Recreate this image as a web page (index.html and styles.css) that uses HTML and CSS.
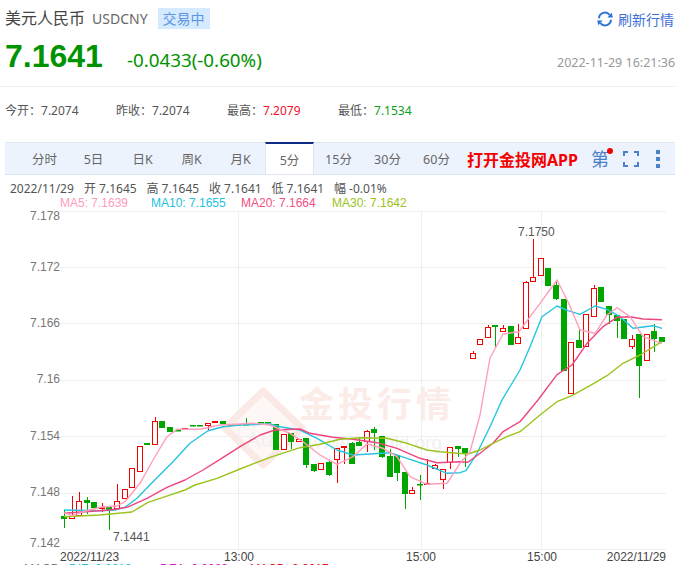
FILE: index.html
```html
<!DOCTYPE html>
<html lang="zh-CN">
<head>
<meta charset="utf-8">
<title>美元人民币 USDCNY</title>
<link rel="stylesheet" href="styles.css">
</head>
<body>
<div class="page">
  <header class="title-row">
    <h1 class="name">美元人民币</h1>
    <span class="code">USDCNY</span>
    <span class="status">交易中</span>
    <a class="refresh">
      <svg class="refresh-icon" viewBox="0 0 16 16" width="16" height="16">
        <path d="M2 7.2A6 6 0 0 1 12.6 3.8" fill="none" stroke="#2a72d6" stroke-width="2"/>
        <path d="M14 8.8A6 6 0 0 1 3.4 12.2" fill="none" stroke="#2a72d6" stroke-width="2"/>
        <path d="M15.8 6.6L10.4 6.6L14.6 1.8Z" fill="#2a72d6"/>
        <path d="M0.2 9.4L5.6 9.4L1.4 14.2Z" fill="#2a72d6"/>
      </svg>
      刷新行情
    </a>
  </header>
  <section class="price-row">
    <span class="price">7.1641</span>
    <span class="change">-0.0433(-0.60%)</span>
    <time class="stamp">2022-11-29 16:21:36</time>
  </section>
  <section class="stats">
    <div class="stat">今开：<span class="val">7.2074</span></div>
    <div class="stat">昨收：<span class="val">7.2074</span></div>
    <div class="stat">最高：<span class="val up">7.2079</span></div>
    <div class="stat">最低：<span class="val down">7.1534</span></div>
  </section>
  <nav class="tabs">
    <a class="tab">分时</a>
    <a class="tab">5日</a>
    <a class="tab">日K</a>
    <a class="tab">周K</a>
    <a class="tab">月K</a>
    <a class="tab active">5分</a>
    <a class="tab">15分</a>
    <a class="tab">30分</a>
    <a class="tab">60分</a>
    <a class="promo">打开金投网APP</a>
    <span class="tool-di">第<i class="dot"></i></span>
    <svg class="tool-full" viewBox="0 0 16 16" width="16" height="16">
      <path d="M1 5V1H5M11 1H15V5M15 11V15H11M5 15H1V11" fill="none" stroke="#4a80cc" stroke-width="2"/>
    </svg>
    <span class="tool-more"><i></i><i></i><i></i></span>
  </nav>
  <div class="info">
    <span class="info-date">2022/11/29</span>
    <span class="info-item">开 7.1645</span>
    <span class="info-item">高 7.1645</span>
    <span class="info-item">收 7.1641</span>
    <span class="info-item">低 7.1641</span>
    <span class="info-item">幅 -0.01%</span>
  </div>
  <div class="legend">
    <span class="ma ma5">MA5: 7.1639</span>
    <span class="ma ma10">MA10: 7.1655</span>
    <span class="ma ma20">MA20: 7.1664</span>
    <span class="ma ma30">MA30: 7.1642</span>
  </div>
  <svg id="chart" class="chart" viewBox="0 211 675 352" width="675" height="352">
    <g class="watermark">
      <polygon class="wm-diamond" points="263,391 302,428 263,465 225,428"/>
      <text class="wm-title" x="299" y="417">金投行情</text>
      <text class="wm-au" x="246" y="447">Au</text>
      <text class="wm-url" x="308" y="449">www.cngold.org</text>
    </g>
    <g id="grid"></g>
    <g id="candles"></g>
    <g id="lines"></g>
    <g class="axis-y">
      <text x="60" y="220">7.178</text>
      <text x="60" y="271">7.172</text>
      <text x="60" y="327">7.166</text>
      <text x="60" y="383">7.16</text>
      <text x="60" y="440">7.154</text>
      <text x="60" y="496">7.148</text>
      <text x="60" y="547">7.142</text>
    </g>
    <g class="axis-x">
      <text x="60" y="561">2022/11/23</text>
      <text class="mid" x="239" y="561">13:00</text>
      <text class="mid" x="421" y="561">15:00</text>
      <text class="mid" x="542" y="561">15:00</text>
      <text class="end" x="666" y="561">2022/11/29</text>
    </g>
    <text class="mark" x="518" y="236">7.1750</text>
    <text class="mark" x="113" y="541">7.1441</text>
  </svg>
  <div class="legend-low">
    <span class="low low-a">MACD</span>
    <span class="low low-b">DIF: 0.0013</span>
    <span class="low low-c">DEA: 0.0023</span>
    <span class="low low-d">MACD: 0.0017</span>
  </div>
</div>
<script src="chart.js"></script>
</body>
</html>
```
FILE: styles.css
```css
html, body {
  margin: 0;
  padding: 0;
  background: #fff;
}
.page {
  width: 675px;
  height: 565px;
  overflow: hidden;
  font-family: "Noto Sans", "Noto Sans CJK SC", sans-serif;
  color: #555;
}
.title-row {
  display: flex;
  align-items: center;
  height: 21px;
  margin-top: 8px;
  padding-left: 5px;
}
.name {
  margin: 0;
  font-size: 16px;
  font-weight: 400;
  line-height: 21px;
  color: #444;
}
.code {
  margin-left: 7px;
  font-size: 14px;
  color: #666;
}
.status {
  margin-left: 10px;
  width: 52px;
  height: 21px;
  line-height: 21px;
  text-align: center;
  font-size: 14px;
  color: #5b95e0;
  background: #d5e9ff;
}
.refresh {
  margin-left: auto;
  display: flex;
  align-items: center;
  gap: 5px;
  font-size: 14px;
  color: #3f6fd6;
  width: 78px;
}
.price-row {
  display: flex;
  align-items: baseline;
  height: 54px;
  padding: 3px 0 0 5px;
  border-bottom: 1px solid #eee;
}
.price {
  font-family: "Liberation Sans", sans-serif;
  font-weight: 700;
  font-size: 32px;
  line-height: 48px;
  color: #009300;
}
.change {
  margin-left: 24px;
  font-size: 18.8px;
  color: #009300;
}
.stamp {
  margin-left: auto;
  width: 118px;
  font-size: 12.5px;
  white-space: nowrap;
  color: #999;
}
.stats {
  display: flex;
  height: 55px;
  align-items: center;
  padding: 0 0 9px 5px;
  font-size: 12px;
  color: #555;
  box-sizing: border-box;
}
.stat {
  width: 111px;
}
.val { color: #555; }
.up { color: #f0102a; }
.down { color: #09a01e; }
.tabs {
  display: flex;
  align-items: stretch;
  height: 31px;
  margin-left: 5px;
  padding-left: 15px;
  background: #edf3fd;
  border-top: 1px solid #dfe6f2;
  border-bottom: 1px solid #dfe6f2;
  font-size: 12.5px;
  color: #666;
}
.tab {
  width: 49px;
  flex: none;
  display: flex;
  align-items: center;
  justify-content: center;
  box-sizing: border-box;
}
.tab.active {
  height: 32px;
  margin-top: -1px;
  background: #fff;
  border-top: 2px solid #0d2a85;
  border-left: 1px solid #dfe6f2;
  border-right: 1px solid #dfe6f2;
}
.promo {
  margin-left: 6px;
  width: 124px;
  display: flex;
  align-items: center;
  font-size: 16px;
  font-weight: 700;
  color: #f40000;
  white-space: nowrap;
}
.tool-di {
  position: relative;
  align-self: center;
  font-size: 18px;
  color: #4a80cc;
  line-height: 20px;
}
.dot {
  position: absolute;
  top: -1px;
  right: -4px;
  width: 6px;
  height: 6px;
  border-radius: 50%;
  background: #f40000;
}
.tool-full {
  align-self: center;
  margin-left: 14px;
}
.tool-more {
  align-self: center;
  margin-left: 17px;
  display: flex;
  flex-direction: column;
  gap: 3px;
}
.tool-more i {
  display: block;
  width: 4px;
  height: 4px;
  background: #4a80cc;
}
.info {
  display: flex;
  padding-left: 10px;
  margin-top: 6px;
  height: 15px;
  line-height: 15px;
  font-size: 12px;
  color: #555;
  white-space: nowrap;
}
.info-date { width: 74px; }
.info-item { width: 62.5px; }
.legend {
  display: flex;
  height: 15px;
  line-height: 15px;
  margin-bottom: -6px;
  font-family: "Liberation Sans", sans-serif;
  font-size: 12px;
  white-space: nowrap;
}
.ma { flex: none; }
.ma5 { margin-left: 60px; width: 91px; color: #ff9cbb; }
.ma10 { width: 90px; color: #22c1dd; }
.ma20 { width: 91px; color: #f5507f; }
.ma30 { color: #9ac31c; }
.chart {
  display: block;
  margin-top: 6px;
}
.axis-y text {
  font-family: "Liberation Sans", sans-serif;
  font-size: 12px;
  fill: #777;
  text-anchor: end;
}
.axis-x text {
  font-family: "Liberation Sans", sans-serif;
  font-size: 12px;
  fill: #444;
}
.axis-x .mid { text-anchor: middle; }
.axis-x .end { text-anchor: end; }
.mark {
  font-family: "Liberation Sans", sans-serif;
  font-size: 12px;
  fill: #555;
}
.wm-diamond {
  fill: #fdf8f6;
  stroke: #fbe9e5;
  stroke-width: 7;
  stroke-linejoin: round;
}
.wm-title {
  font-family: "Noto Sans CJK SC", sans-serif;
  font-weight: 700;
  font-size: 35px;
  letter-spacing: 4px;
  fill: #fbece8;
}
.wm-au {
  font-family: "Liberation Sans", sans-serif;
  font-size: 22px;
  fill: #f3f0ee;
}
.wm-url {
  font-family: "Liberation Sans", sans-serif;
  font-size: 19px;
  fill: #f1f1f1;
}
.legend-low {
  display: flex;
  height: 12px;
  line-height: 12px;
  padding-left: 24px;
  font-family: "Liberation Sans", sans-serif;
  font-size: 12px;
  white-space: nowrap;
}
.low { flex: none; }
.low-a { width: 45px; color: #777; }
.low-b { width: 91px; color: #22c1dd; }
.low-c { width: 90px; color: #d620c0; }
.low-d { color: #e01010; }
```
FILE: chart.js
```js
var NS = "http://www.w3.org/2000/svg";
function el(parent, name, attrs) {
  var e = document.createElementNS(NS, name);
  for (var k in attrs) e.setAttribute(k, attrs[k]);
  parent.appendChild(e);
  return e;
}
var grid = document.getElementById("grid");
[211, 267, 323, 380, 436, 493, 549].forEach(function (y) {
  el(grid, "line", { x1: 60, x2: 666, y1: y + 0.5, y2: y + 0.5, stroke: "#eeeeee" });
});
[238, 421, 541].forEach(function (x) {
  el(grid, "line", { x1: x + 0.5, x2: x + 0.5, y1: 211, y2: 549, stroke: "#eeeeee" });
});

// [direction, wick top, body top, body bottom, wick bottom]
var K = [
  ["g",510,516,519,528],["r",496,516,519,519],["r",492,501,516,516],["g",497,500,503,514],
  ["g",502,502,508,508],["r",503,507,509,512],["g",507,507,510,530],["r",484,501,509,510],
  ["r",489,489,499,499],["r",468,468,488,488],["r",446,446,472,472],["g",444,443,445,445],
  ["r",417,421,445,445],["g",421,421,428,428],["g",427,427,432,432],["g",430,430,431,431],
  ["r",428,428,430,430],["g",426,425,426,426],["g",426,425,426,426],["r",423,423,426,430],
  ["r",422,421,422,422],["g",421,421,424,424],["g",425,424,426,426],["g",424,424,425,425],
  ["g",418,424,425,425],["r",423,423,424,424],["g",422,422,423,423],["g",422,422,423,423],
  ["g",424,424,450,450],["r",434,434,450,450],["g",433,433,442,449],["r",439,439,442,442],
  ["g",438,438,465,468],["g",464,464,471,472],["r",463,463,470,470],["g",461,462,475,476],
  ["r",448,448,460,483],["r",446,446,447,464],["g",442,443,464,464],["g",437,442,446,446],
  ["r",430,431,442,452],["g",427,429,433,450],["g",436,436,457,458],["g",449,456,477,477],
  ["g",455,455,473,481],["g",472,472,494,509],["r",487,490,494,494],["g",475,484,485,500],
  ["r",459,483,484,484],["r",464,465,469,469],["r",469,469,480,489],["r",447,447,463,469],
  ["g",446,446,449,457],["g",448,448,453,467],
  ["r",351,353,359,359],["r",339,339,345,345],["r",325,327,338,338],["g",326,325,327,347],
  ["r",325,328,332,332],["g",326,326,345,345],["r",324,337,344,344],["r",281,282,329,329],
  ["r",239,277,282,282],["r",258,258,276,276],["g",268,268,286,286],["g",282,285,299,300],
  ["g",299,299,371,371],["r",342,342,394,394],["g",328,340,348,348],["r",314,314,347,347],
  ["r",285,288,317,317],["g",287,287,302,302],["g",306,306,315,324],["g",315,315,321,338],
  ["g",319,319,339,339],["r",335,339,347,349],["g",334,334,366,398],["r",334,334,361,361],
  ["g",324,331,339,352],["g",337,337,342,342]
];
var candles = document.getElementById("candles");
K.forEach(function (c, i) {
  var x = Math.round(64 + i * 7.57);
  var col = c[0] === "r" ? "#f50000" : "#00a600";
  el(candles, "line", { x1: x + 0.5, x2: x + 0.5, y1: c[1], y2: c[4], stroke: col });
  if (c[0] === "r") {
    el(candles, "rect", { x: x - 2.5, y: c[2] + 0.5, width: 5, height: Math.max(c[3] - c[2] - 1, 1), fill: "#fff", stroke: col });
  } else {
    el(candles, "rect", { x: x - 3, y: c[2], width: 6, height: Math.max(c[3] - c[2], 1.5), fill: col });
  }
});

// points read in crops: [x, y] pairs
var MA = {
  "#9ac31c": [64,516.7,100,515,132,512,148,502.3,163,497.3,185,490,195,485,217,478.3,240,469,270,457.3,300,447.7,320,444.3,340,439.3,360,437.7,387,438.3,407,443.3,427,450,440,451.7,457,453.3,468,454,480,450,495,442.3,507,436.7,520,431.7,540,415,557,401.7,572,395.7,590,385.7,607,375.7,623,363.3,640,355,662,341.7],
  "#f0457f": [64,513.3,110,510,127,507.3,147,498.3,167,487.3,185,480,203,470,220,459.3,240,446.7,260,435,275,430,300,429,310,433.3,333,437.3,353,439.3,377,442.7,397,448.3,420,458.3,437,462.7,460,461.7,468,462.3,480,453.3,493,443.3,503,431.7,520,421.7,538,400,557,374.7,572,365,587,343.3,603,326.7,617,317.3,630,316.7,643,319,662,319.7],
  "#26c4de": [64,510,100,510.7,115,510,125,507.3,137,498.3,153,481.7,173,461.7,190,443.3,208,430.7,223,426.7,240,425,270,424,280,426.7,300,430,317,438.3,337,450,353,455,370,454,390,452.7,407,458.3,427,465,447,473.3,460,472.7,466,470.7,477,453.3,490,426.7,502,400,520,370,530,346.7,542,316.7,557,306,568,310.7,580,314.3,595,306,607,309.3,620,316.7,633,328.3,653,325.7,662,328.3],
  "#ff9fbc": [64,512.7,72,515.7,83,511.7,100,507.3,117,506,125,501.7,140,483.3,153,460,167,436.7,177,429.3,200,429.3,220,425,240,424,253,423.3,270,425,290,433.3,303,441.7,320,455,337,464.3,353,456.7,367,444,383,448.3,397,456.7,410,476.7,427,484.3,447,483.3,460,463.3,470,451.7,480,415,490,358,503,334,519,331.7,540,303.3,557,280,568,301.7,580,330,595,333.3,607,315,617,307.7,630,316.7,643,336.7,662,343.3]
};
var lines = document.getElementById("lines");
["#26c4de", "#f0457f", "#9ac31c", "#ff9fbc"].forEach(function (col) {
  var p = MA[col], pts = [];
  for (var i = 0; i < p.length; i += 2) pts.push(p[i] + "," + p[i + 1]);
  el(lines, "polyline", { points: pts.join(" "), fill: "none", stroke: col, "stroke-width": 1.4, "stroke-linejoin": "round" });
});
```
